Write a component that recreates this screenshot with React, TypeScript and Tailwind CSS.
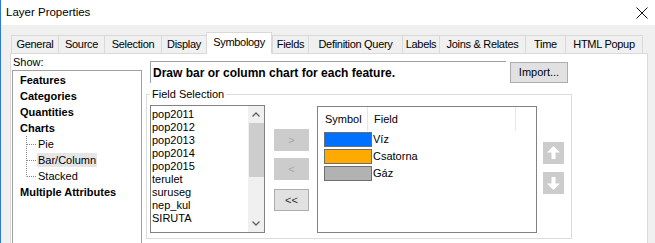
import React from 'react';

// tabs of the properties dialog, widths read off the screenshot
const tabs = [
  { label: 'General', w: 'w-[47px]' },
  { label: 'Source', w: 'w-[46px]' },
  { label: 'Selection', w: 'w-[57px]' },
  { label: 'Display', w: 'w-[45px]' },
  { label: 'Symbology', w: 'w-[66px]', active: true },
  { label: 'Fields', w: 'w-[36px]' },
  { label: 'Definition Query', w: 'w-[94px]' },
  { label: 'Labels', w: 'w-[37px]' },
  { label: 'Joins & Relates', w: 'w-[86px]' },
  { label: 'Time', w: 'w-[40px]' },
  { label: 'HTML Popup', w: 'w-[78px]', last: true },
];

const fields = ['pop2011', 'pop2012', 'pop2013', 'pop2014', 'pop2015', 'terulet', 'suruseg', 'nep_kul', 'SIRUTA', '---'];

const symbols = [
  { name: 'Víz', color: 'bg-[#0070ff]' },
  { name: 'Csatorna', color: 'bg-[#ffaa00]' },
  { name: 'Gáz', color: 'bg-[#b2b2b2]' },
];

const TreeLine = ({ last }: { last?: boolean }) => (
  <svg width="17" height="16" className="shrink-0">
    <line x1="6.5" y1="0" x2="6.5" y2={last ? 8.5 : 16} stroke="#8a8a8a" strokeDasharray="1 1" />
    <line x1="7" y1="8.5" x2="17" y2="8.5" stroke="#8a8a8a" strokeDasharray="1 1" />
  </svg>
);

const Chevron = ({ up }: { up?: boolean }) => (
  <svg width="8" height="5" viewBox="0 0 8 5">
    <polyline
      points={up ? '0.5,4.5 4,1 7.5,4.5' : '0.5,0.5 4,4 7.5,0.5'}
      fill="none"
      stroke="#606060"
      strokeWidth="1.3"
    />
  </svg>
);

const App = () => {
  return (
    <div className="w-[655px] h-[243px] overflow-hidden bg-[#f0f0f0] border-l border-[#2b79d8] font-['Liberation_Sans',Arial,sans-serif] text-[11px] text-black flex flex-col">
      {/* title bar */}
      <div className="h-[25px] shrink-0 bg-white flex items-center justify-between pl-[5px] pr-[7px]">
        <span className="text-[11.5px]">Layer Properties</span>
        <svg width="12" height="12" viewBox="0 0 12 12">
          <line x1="0.5" y1="0.5" x2="11.5" y2="11.5" stroke="#111" strokeWidth="1" />
          <line x1="11.5" y1="0.5" x2="0.5" y2="11.5" stroke="#111" strokeWidth="1" />
        </svg>
      </div>

      {/* tab strip */}
      <div className="h-[28px] shrink-0 flex items-end pl-[10px] tracking-[-0.3px]">
        {tabs.map((t) =>
          t.active ? (
            <div
              key={t.label}
              className={`${t.w} h-[22px] -mb-px relative z-10 bg-white border-t border-l border-r border-[#d9d9d9] flex items-center justify-center pb-[2px]`}
            >
              {t.label}
            </div>
          ) : (
            <div
              key={t.label}
              className={`${t.w} h-[18px] border-t border-l border-[#d9d9d9] ${t.last ? 'border-r' : ''} flex items-center justify-center`}
            >
              {t.label}
            </div>
          )
        )}
      </div>

      {/* tab page */}
      <div className="ml-[9px] w-[638px] h-[200px] shrink-0 bg-white border border-[#d9d9d9] flex">
        {/* show list */}
        <div className="w-[131px] shrink-0 flex flex-col">
          <div className="pl-[2px] leading-[16px]">Show:</div>
          <div className="ml-px w-[130px] h-[180px] border border-[#a0a0a0] pt-px pl-[7px] leading-[16px]">
            <div className="font-bold">Features</div>
            <div className="font-bold">Categories</div>
            <div className="font-bold">Quantities</div>
            <div className="font-bold">Charts</div>
            <div className="flex items-center h-[16px]">
              <TreeLine />
              <span className="px-px">Pie</span>
            </div>
            <div className="flex items-center h-[16px]">
              <TreeLine />
              <span className="px-px leading-[14px] bg-[#e5e5e5]">Bar/Column</span>
            </div>
            <div className="flex items-center h-[16px]">
              <TreeLine last />
              <span className="px-px">Stacked</span>
            </div>
            <div className="font-bold">Multiple Attributes</div>
          </div>
        </div>

        {/* chart settings */}
        <div className="flex flex-col">
          <div className="flex items-start mt-[7px]">
            <div className="ml-[8px] w-[356px] h-[22px] border-t border-l border-[#a0a0a0] pl-[2px] leading-[22px] text-[12px] font-bold">
              Draw bar or column chart for each feature.
            </div>
            <button className="ml-[4px] mt-px w-[58px] h-[21px] bg-[#e1e1e1] border border-[#adadad] text-[11px]">
              Import...
            </button>
          </div>

          <fieldset className="ml-[4px] mt-[5px] w-[426px] h-[151px] border border-[#dcdcdc]">
            <legend className="ml-[3px] px-[2px] leading-[13px]">Field Selection</legend>
            <div className="flex items-start">
              {/* available fields */}
              <div className="ml-[3px] mt-[4px] w-[115px] h-[128px] border border-[#828282] flex overflow-hidden">
                <div className="flex-1 pl-px pt-[2px] leading-[13px]">
                  {fields.map((f) => (
                    <div key={f}>{f}</div>
                  ))}
                </div>
                <div className="w-[16px] bg-[#f0f0f0] flex flex-col items-center">
                  <div className="h-[17px] flex items-center justify-center">
                    <Chevron up />
                  </div>
                  <div className="w-[15px] h-[54px] bg-[#cdcdcd]" />
                  <div className="flex-1" />
                  <div className="h-[17px] flex items-center justify-center">
                    <Chevron />
                  </div>
                </div>
              </div>

              {/* move buttons */}
              <div className="ml-[9px] mt-[28px] flex flex-col">
                <div className="w-[35px] h-[22px] bg-[#cccccc] text-[#a8a8a8] flex items-center justify-center">&gt;</div>
                <div className="mt-[7px] w-[35px] h-[22px] bg-[#cccccc] text-[#a8a8a8] flex items-center justify-center">&lt;</div>
                <div className="mt-[9px] w-[35px] h-[22px] bg-[#e1e1e1] border border-[#adadad] text-[#333] flex items-center justify-center">&lt;&lt;</div>
              </div>

              {/* chosen fields */}
              <div className="ml-[8px] mt-[5px] w-[220px] h-[127px] border border-[#828282]">
                <div className="h-[24px] flex">
                  <div className="w-[50px] pl-[7px] border-r border-[#e5e5e5] flex items-center">Symbol</div>
                  <div className="w-[148px] pl-[6px] border-r border-[#e5e5e5] flex items-center">Field</div>
                </div>
                {symbols.map((s) => (
                  <div key={s.name} className="h-[17px] flex items-center">
                    <div className={`ml-[6px] w-[48px] h-[15px] border border-[#6e6e6e] ${s.color}`} />
                    <span className="ml-px">{s.name}</span>
                  </div>
                ))}
              </div>

              {/* order buttons */}
              <div className="ml-[6px] mt-[41px] flex flex-col gap-[8px]">
                <div className="w-[21px] h-[22px] bg-[#cccccc] flex items-center justify-center">
                  <svg width="21" height="22" viewBox="0 0 21 22">
                    <polygon points="10.5,4 4,10.5 8.5,10.5 8.5,17 12.5,17 12.5,10.5 17,10.5" fill="#fff" />
                  </svg>
                </div>
                <div className="w-[21px] h-[22px] bg-[#cccccc] flex items-center justify-center">
                  <svg width="21" height="22" viewBox="0 0 21 22">
                    <polygon points="10.5,18 4,11.5 8.5,11.5 8.5,5 12.5,5 12.5,11.5 17,11.5" fill="#fff" />
                  </svg>
                </div>
              </div>
            </div>
          </fieldset>
        </div>
      </div>
    </div>
  );
};

export default App;
